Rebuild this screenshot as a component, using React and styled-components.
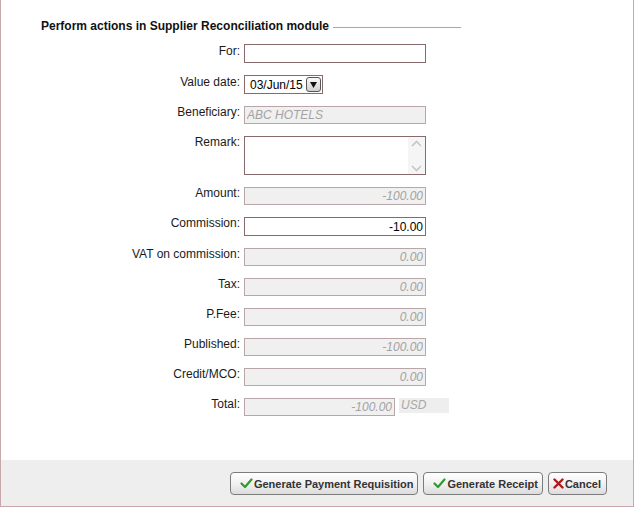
import React from "react";
import styled, { createGlobalStyle } from "styled-components";

const GlobalStyle = createGlobalStyle`
  html, body {
    margin: 0;
    padding: 0;
    background: #fff;
  }
  body {
    font-family: "Liberation Sans", Arial, sans-serif;
    font-size: 12px;
    color: #1a1a1a;
  }
`;

const Frame = styled.div`
  width: 634px;
  height: 507px;
  box-sizing: border-box;
  border: 1px solid #c9a7aa;
  border-top: none;
  display: flex;
  flex-direction: column;
  background: #fff;
`;

const Content = styled.div`
  flex: 1;
  padding-top: 19px;
`;

const Legend = styled.div`
  display: flex;
  align-items: center;
  margin-left: 40px;
  width: 420px;
`;

const LegendTitle = styled.span`
  font-weight: bold;
  font-size: 12px;
  line-height: 14px;
  color: #111;
  white-space: nowrap;
`;

const Rule = styled.span`
  flex: 1;
  height: 1px;
  margin-left: 4px;
  margin-top: 2px;
  background: #b3a3a5;
`;

const Form = styled.div`
  display: grid;
  grid-template-columns: 239px auto;
  column-gap: 4px;
  row-gap: 12px;
  margin-top: 11px;
  align-items: start;
`;

const Label = styled.label`
  text-align: right;
  line-height: 13px;
  margin-top: ${(p) => p.$offset || 0}px;
  color: #1a1a1a;
  white-space: nowrap;
`;

const FieldRow = styled.div`
  display: flex;
  align-items: flex-start;
  gap: 4px;
`;

const Input = styled.input`
  box-sizing: border-box;
  width: ${(p) => p.$width || 182}px;
  height: ${(p) => p.$height || 18}px;
  margin: 0;
  padding: 0 2px;
  font-family: inherit;
  font-size: 12px;
  text-align: ${(p) => p.$align || "right"};
  outline: none;
  border: 1px solid ${(p) => (p.$off ? "#b8a6a8" : "#876a6b")};
  background: ${(p) => (p.$off ? "#f0f0f0" : "#fff")};
  color: ${(p) => (p.$off ? "#a3a3a3" : "#000")};
  font-style: ${(p) => (p.$off ? "italic" : "normal")};
`;

const Currency = styled.span`
  box-sizing: border-box;
  width: 50px;
  height: 15px;
  padding-left: 2px;
  line-height: 14px;
  background: #eeeeee;
  color: #a8a8a8;
  font-style: italic;
`;

const DateBox = styled.div`
  box-sizing: border-box;
  width: 79px;
  height: 19px;
  border: 1px solid #876a6b;
  display: flex;
  align-items: center;
  justify-content: space-between;
  padding: 0 1px 0 5px;
  font-size: 12px;
  color: #000;
`;

const DropButton = styled.span`
  box-sizing: border-box;
  width: 15px;
  height: 15px;
  border: 1px solid #555;
  border-radius: 3px;
  background: linear-gradient(#fafafa, #cfcfcf);
  display: flex;
  align-items: center;
  justify-content: center;
`;

const AreaBox = styled.div`
  box-sizing: border-box;
  width: 182px;
  height: 39px;
  border: 1px solid #876a6b;
  display: flex;
`;

const Area = styled.textarea`
  flex: 1;
  border: none;
  outline: none;
  resize: none;
  margin: 0;
  padding: 2px;
  font-family: inherit;
  font-size: 12px;
  overflow: hidden;
`;

const ScrollTrack = styled.div`
  width: 17px;
  background: #f5f5f5;
  display: flex;
  flex-direction: column;
  justify-content: space-between;
  align-items: center;
  padding: 3px 0 2px;
`;

const Footer = styled.div`
  height: 45px;
  background: #eeeeee;
  display: flex;
  justify-content: flex-end;
  align-items: center;
  gap: 5px;
  padding-right: 26px;
  padding-top: 1px;
`;

const Button = styled.button`
  box-sizing: border-box;
  height: 23px;
  display: flex;
  align-items: center;
  gap: 1px;
  padding: 0 ${(p) => p.$padRight || 4}px 0 ${(p) => p.$padLeft || 9}px;
  border: 1px solid #7c7c7c;
  border-radius: 4px;
  background: linear-gradient(#ffffff 0%, #f1f1f1 50%, #dcdcdc 100%);
  font-family: inherit;
  font-size: 11px;
  font-weight: bold;
  color: #333;
  cursor: pointer;
`;

const Check = () => (
  <svg width="13" height="11" viewBox="0 0 13 11">
    <path d="M1.5 5.5 L5 9 L11.5 1.5" fill="none" stroke="#2f9a2f" strokeWidth="2.2" strokeLinecap="round" strokeLinejoin="round" />
  </svg>
);

const Cross = () => (
  <svg width="11" height="11" viewBox="0 0 11 11">
    <path d="M1.5 1.5 L9.5 9.5 M9.5 1.5 L1.5 9.5" fill="none" stroke="#b01818" strokeWidth="2.4" strokeLinecap="round" />
  </svg>
);

const Chevron = ({ up }) => (
  <svg width="11" height="7" viewBox="0 0 11 7">
    <path d={up ? "M1 6 L5.5 1.5 L10 6" : "M1 1 L5.5 5.5 L10 1"} fill="none" stroke="#c6c6c6" strokeWidth="1.6" />
  </svg>
);

const amounts = [
  { label: "VAT on commission:", value: "0.00" },
  { label: "Tax:", value: "0.00" },
  { label: "P.Fee:", value: "0.00" },
  { label: "Published:", value: "-100.00" },
  { label: "Credit/MCO:", value: "0.00" },
];

function App() {
  return (
    <>
      <GlobalStyle />
      <Frame>
        <Content>
          <Legend>
            <LegendTitle>Perform actions in Supplier Reconciliation module</LegendTitle>
            <Rule />
          </Legend>
          <Form>
            <Label $offset={1}>For:</Label>
            <Input $height={19} defaultValue="" />

            <Label $offset={1}>Value date:</Label>
            <DateBox>
              <span>03/Jun/15</span>
              <DropButton>
                <svg width="7" height="6" viewBox="0 0 7 6">
                  <path d="M0 0 H7 L3.5 6 Z" fill="#111" />
                </svg>
              </DropButton>
            </DateBox>

            <Label>Beneficiary:</Label>
            <Input $off $align="left" readOnly value="ABC HOTELS" />

            <Label>Remark:</Label>
            <AreaBox>
              <Area defaultValue="" />
              <ScrollTrack>
                <Chevron up />
                <Chevron />
              </ScrollTrack>
            </AreaBox>

            <Label>Amount:</Label>
            <Input $off readOnly value="-100.00" />

            <Label>Commission:</Label>
            <Input $height={19} readOnly value="-10.00" />

            {amounts.map((a) => (
              <React.Fragment key={a.label}>
                <Label>{a.label}</Label>
                <Input $off readOnly value={a.value} />
              </React.Fragment>
            ))}

            <Label>Total:</Label>
            <FieldRow>
              <Input $off $width={151} readOnly value="-100.00" />
              <Currency>USD</Currency>
            </FieldRow>
          </Form>
        </Content>
        <Footer>
          <Button>
            <Check />
            Generate Payment Requisition
          </Button>
          <Button>
            <Check />
            Generate Receipt
          </Button>
          <Button $padLeft={4} $padRight={5}>
            <Cross />
            Cancel
          </Button>
        </Footer>
      </Frame>
    </>
  );
}

export default App;
